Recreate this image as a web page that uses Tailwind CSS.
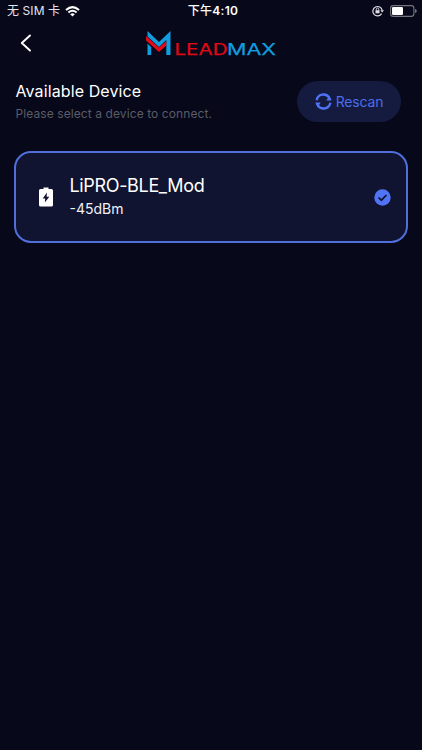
<!DOCTYPE html>
<html lang="zh">
<head>
<meta charset="utf-8">
<title>LEADMAX</title>
<script src="https://cdn.jsdelivr.net/npm/@tailwindcss/browser@4"></script>
</head>
<body class="h-[750px] w-[422px] overflow-hidden bg-[#070819] font-['Inter','Noto_Sans_CJK_SC',sans-serif] text-white">
<header>
  <div class="grid h-[22px] grid-cols-3 items-center pl-[7px] pr-[5px] text-[12px] leading-[22px]">
    <div class="flex items-center gap-[5px] whitespace-nowrap text-[#e4e4ee]">
      <span class="tracking-[0.1px]">无 SIM 卡</span>
      <svg class="h-[11px] w-[15px]" viewBox="0 0 15 11" fill="none" stroke="#fff" stroke-width="2"><path d="M1 4Q7.500-1.700 14 4M3.400 6.500Q7.500 3 11.600 6.500"/><path d="M5.200 8.200Q7.500 6.500 9.800 8.200L7.500 10.600Z" fill="#fff" stroke="none"/></svg>
    </div>
    <div class="pl-[2px] text-center font-medium whitespace-nowrap tracking-[0.3px]">下午<span class="font-semibold">4:10</span></div>
    <div class="flex items-center justify-end gap-[6px]">
      <svg class="h-3 w-3" viewBox="0 0 12 12" fill="none" stroke="#dcdce6"><path d="M9.600 8.600A4.700 4.700 0 1 1 10.200 5.500" stroke-width="1.200"/><path d="M8.300 5.300H12L10.200 7.600Z" fill="#dcdce6" stroke="none"/><path d="M3.500 5.200H7.500V8.300H3.500Z" fill="#dcdce6" stroke="none"/><path d="M4.300 5.500V4.200A1.200 1.200 0 0 1 6.700 4.200V5.500" stroke-width=".9"/></svg>
      <svg class="h-3 w-[27px]" viewBox="0 0 27 12"><rect x=".6" y=".6" width="23.300" height="10.800" rx="2.700" fill="none" stroke="#74747f" stroke-width="1.100"/><rect x="2" y="2" width="11" height="8" rx="1.200" fill="#fff"/><path d="M25 4Q26.800 4.400 26.800 6T25 8Z" fill="#74747f"/></svg>
    </div>
  </div>
  <div class="flex h-[42px] items-center pl-5">
    <svg class="h-[18px] w-3" viewBox="0 0 12 18" fill="none" stroke="#fff" stroke-width="1.900" stroke-linecap="round" stroke-linejoin="round"><path d="M10 1.500L1.800 9L10 16.500"/></svg>
    <svg class="ml-[113px] h-[38px] w-[140px] overflow-visible" viewBox="0 -5 140 38">
      <path d="M2.500 2L14 13L25.500 2V26H21.300V11L14 18L2.500 7.500Z" fill="#119ddf"/>
      <path d="M2.500 14.500L6.200 18V26H2.500Z" fill="#119ddf"/>
      <path d="M1 7L14 18.500L21.300 12V16.500L14 23L1 11.500Z" fill="#e20b19"/>
      <g font-family="Inter, sans-serif" font-size="15.500" font-weight="400" stroke-width=".25">
        <text x="29.500" y="26" fill="#df0917" stroke="#df0917" textLength="53" lengthAdjust="spacingAndGlyphs">LEAD</text>
        <text x="82" y="26" fill="#119ddf" stroke="#119ddf" textLength="49" lengthAdjust="spacingAndGlyphs">MAX</text>
      </g>
    </svg>
  </div>
</header>
<main>
  <section class="flex items-start justify-between pt-[17px] pr-[21px] pl-[15.500px]">
    <div class="-mt-px">
      <h1 class="text-[16px] leading-[22px] tracking-[0.11px]">Available Device</h1>
      <p class="text-[12px] leading-[24px] tracking-[0.09px] text-[#5b5c67]">Please select a device to connect.</p>
    </div>
    <button class="flex h-[41px] w-[104px] items-center justify-center gap-1 rounded-full bg-[#141b3f] text-[14px] text-[#4b6deb]">
      <svg class="h-[17px] w-[17px]" viewBox="0 0 17 17" fill="none" stroke="#4f73f5" stroke-width="2.300"><path d="M1.600 7.300A7 7 0 0 1 14.200 4.500"/><path d="M15.400 9.700A7 7 0 0 1 2.800 12.500"/><path d="M14.200 3Q16.300 5 16.500 7.500H11.300ZM2.800 14Q.7 12 .5 9.500H5.700Z" fill="#4f73f5" stroke="none"/></svg>
      <span class="-mt-px tracking-[-0.15px]">Rescan</span>
    </button>
  </section>
  <section class="mt-[25px] ml-[14px] flex h-[92px] w-[394px] items-center rounded-[17px] border-2 border-[#506fda] bg-[#101430] pr-[15px] pl-[22.500px]">
    <svg class="h-5 w-[14px]" viewBox="0 0 14 20"><path d="M4.500.5H9.500V2H12.500Q14 2 14 3.500V18Q14 19.500 12.500 19.500H1.500Q0 19.500 0 18V3.500Q0 2 1.500 2H4.500Z" fill="#fff"/><path d="M8 5.500L3.700 11.500H6.200L5.800 15.500L10.300 9.700H7.600Z" fill="#101430"/></svg>
    <div class="ml-[17px] flex-1">
      <div class="text-[18px] leading-6 tracking-[-0.34px]">LiPRO-BLE_Mod</div>
      <div class="text-[14px] leading-[22px] text-[#f0f0f6]">-45dBm</div>
    </div>
    <svg class="h-[17px] w-[17px]" viewBox="0 0 17 17"><circle cx="8.500" cy="8.500" r="8.200" fill="#5174f6"/><path d="M4.500 8.500L7.400 11.200L12.500 6" fill="none" stroke="#101430" stroke-width="1.700"/></svg>
  </section>
</main>
</body>
</html>
